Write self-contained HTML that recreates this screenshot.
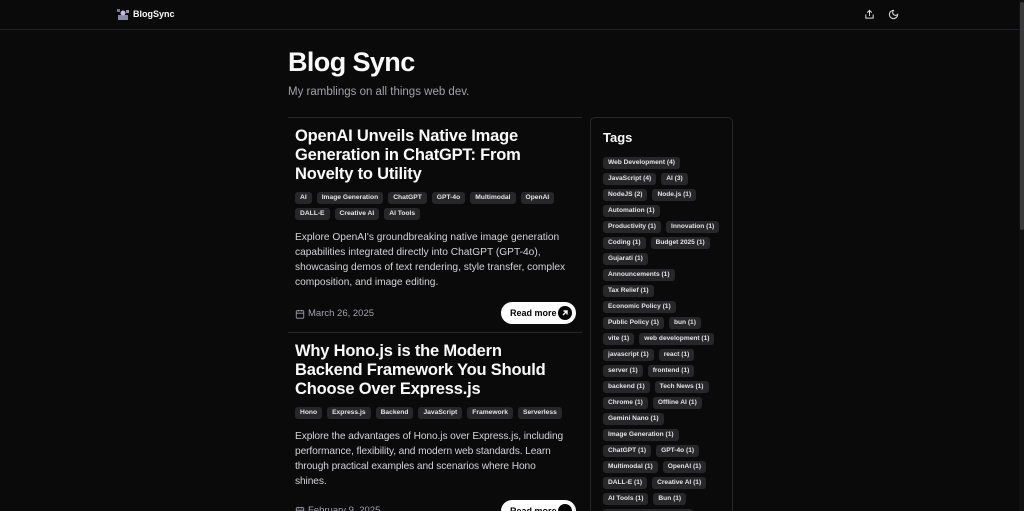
<!DOCTYPE html>
<html><head><meta charset="utf-8"><style>
*{margin:0;padding:0;box-sizing:border-box}
html,body{width:1024px;height:511px;overflow:hidden;background:#0a0a0b;color:#fafafa;font-family:"Liberation Sans",sans-serif;position:relative}
.hdr{position:absolute;left:0;top:0;width:1024px;height:30px;border-bottom:1px solid #222226}
.logo{position:absolute;left:117px;top:8px;width:12px;height:13px}
.brand{position:absolute;left:133px;top:9px;font-size:9px;font-weight:bold}
.ic{position:absolute;top:9px}
.sb{position:absolute;right:0;top:0;width:5px;height:511px;background:#111}
.sb i{position:absolute;left:1px;top:2px;width:4px;height:228px;background:#3a3a3d;border-radius:2px}
h1{position:absolute;left:288px;top:47px;font-size:27px;font-weight:bold;letter-spacing:-0.6px}
.sub{position:absolute;left:288px;top:86px;font-size:11.5px;color:#a1a1aa}
.col{position:absolute;left:288px;top:117px;width:294px;height:394px;overflow:hidden;border-top:1px solid #27272a}
.post{padding:8px 7px 0 7px;border-bottom:1px solid #27272a;height:215px;position:relative}
.post h2{font-size:16.5px;line-height:19px;font-weight:bold;margin-top:1px;letter-spacing:-0.2px;width:262px}
.tags{margin-top:8px;display:flex;flex-wrap:wrap;gap:4px 5px}
.t{background:#27272a;border-radius:3px;font-size:6.7px;font-weight:bold;height:12px;line-height:12px;padding:0 5px;color:#e4e4e7;white-space:nowrap}
.desc{margin-top:10px;font-size:10.2px;line-height:15px;color:#d4d4d8;width:284px}
.date{position:absolute;left:7px;top:190px;font-size:9.5px;color:#a1a1aa;display:flex;align-items:center;gap:3px}
.rm{position:absolute;left:213px;top:184px;width:75px;height:22px;background:#fff;border-radius:11px;color:#000;font-size:9px;font-weight:bold;line-height:22px;padding-left:9px}
.rm b{position:absolute;right:4px;top:4px;width:14px;height:14px;border-radius:7px;background:#000}
.side{position:absolute;left:590px;top:117px;width:143px;height:394px;overflow:hidden;border:1px solid #27272a;border-bottom:none;border-radius:5px 5px 0 0;padding:12px 12px}
.side h3{font-size:13px;font-weight:bold;margin-bottom:12px}
.st{display:flex;flex-wrap:wrap;gap:4px 5px}
.st .t{font-size:6.6px;padding:0 5px}
</style></head><body>
<div class="hdr">
<svg class="logo" viewBox="0 0 12 13"><rect x="1" y="7" width="10" height="5" fill="#8a8aa8"/><circle cx="6" cy="5" r="2.5" fill="#c9b8e8"/><rect x="0" y="1" width="3" height="3" fill="#777"/><rect x="9" y="2" width="3" height="3" fill="#999"/></svg>
<div class="brand">BlogSync</div>
<svg class="ic" style="left:864px" width="11" height="11" viewBox="0 0 24 24" fill="none" stroke="#ddd" stroke-width="2.2"><path d="M4 12v8h16v-8M12 3v12M7 8l5-5 5 5"/></svg>
<svg class="ic" style="left:888px" width="11" height="11" viewBox="0 0 24 24" fill="none" stroke="#ddd" stroke-width="2.2"><path d="M12 3a6 6 0 0 0 9 9 9 9 0 1 1-9-9z"/></svg>
</div>
<div class="sb"><i></i></div>
<h1>Blog Sync</h1>
<div class="sub">My ramblings on all things web dev.</div>
<div class="col">
<div class="post"><h2>OpenAI Unveils Native Image Generation in ChatGPT: From Novelty to Utility</h2>
<div class="tags"><span class="t">AI</span><span class="t">Image Generation</span><span class="t">ChatGPT</span><span class="t">GPT-4o</span><span class="t">Multimodal</span><span class="t">OpenAI</span><span class="t">DALL-E</span><span class="t">Creative AI</span><span class="t">AI Tools</span></div>
<div class="desc">Explore OpenAI's groundbreaking native image generation capabilities integrated directly into ChatGPT (GPT-4o), showcasing demos of text rendering, style transfer, complex composition, and image editing.</div>
<div class="date"><svg width="10" height="10" viewBox="0 0 24 24" fill="none" stroke="#a1a1aa" stroke-width="2"><rect x="3" y="4" width="18" height="18" rx="2"/><path d="M3 10h18M8 2v4M16 2v4"/></svg>March 26, 2025</div>
<div class="rm">Read more<b><svg width="14" height="14" viewBox="0 0 14 14" fill="none" stroke="#fff" stroke-width="1.4"><path d="M5 9l4-4M5.5 5H9v3.5"/></svg></b></div></div>
<div class="post"><h2>Why Hono.js is the Modern Backend Framework You Should Choose Over Express.js</h2>
<div class="tags"><span class="t">Hono</span><span class="t">Express.js</span><span class="t">Backend</span><span class="t">JavaScript</span><span class="t">Framework</span><span class="t">Serverless</span></div>
<div class="desc" style="width:272px;letter-spacing:-0.1px">Explore the advantages of Hono.js over Express.js, including performance, flexibility, and modern web standards. Learn through practical examples and scenarios where Hono shines.</div>
<div class="date" style="top:172px"><svg width="10" height="10" viewBox="0 0 24 24" fill="none" stroke="#a1a1aa" stroke-width="2"><rect x="3" y="4" width="18" height="18" rx="2"/><path d="M3 10h18M8 2v4M16 2v4"/></svg>February 9, 2025</div>
<div class="rm" style="top:167px">Read more<b></b></div></div>
</div>
<div class="side"><h3>Tags</h3><div class="st">
<span class="t">Web Development (4)</span><span class="t">JavaScript (4)</span><span class="t">AI (3)</span><span class="t">NodeJS (2)</span><span class="t">Node.js (1)</span><span class="t">Automation (1)</span><span class="t">Productivity (1)</span><span class="t">Innovation (1)</span><span class="t">Coding (1)</span><span class="t">Budget 2025 (1)</span><span class="t">Gujarati (1)</span><span class="t">Announcements (1)</span><span class="t">Tax Relief (1)</span><span class="t">Economic Policy (1)</span><span class="t">Public Policy (1)</span><span class="t">bun (1)</span><span class="t">vite (1)</span><span class="t">web development (1)</span><span class="t">javascript (1)</span><span class="t">react (1)</span><span class="t">server (1)</span><span class="t">frontend (1)</span><span class="t">backend (1)</span><span class="t">Tech News (1)</span><span class="t">Chrome (1)</span><span class="t">Offline AI (1)</span><span class="t">Gemini Nano (1)</span><span class="t">Image Generation (1)</span><span class="t">ChatGPT (1)</span><span class="t">GPT-4o (1)</span><span class="t">Multimodal (1)</span><span class="t">OpenAI (1)</span><span class="t">DALL-E (1)</span><span class="t">Creative AI (1)</span><span class="t">AI Tools (1)</span><span class="t">Bun (1)</span><span class="t">Serverless Framework (1)</span>
</div></div>
</body></html>
